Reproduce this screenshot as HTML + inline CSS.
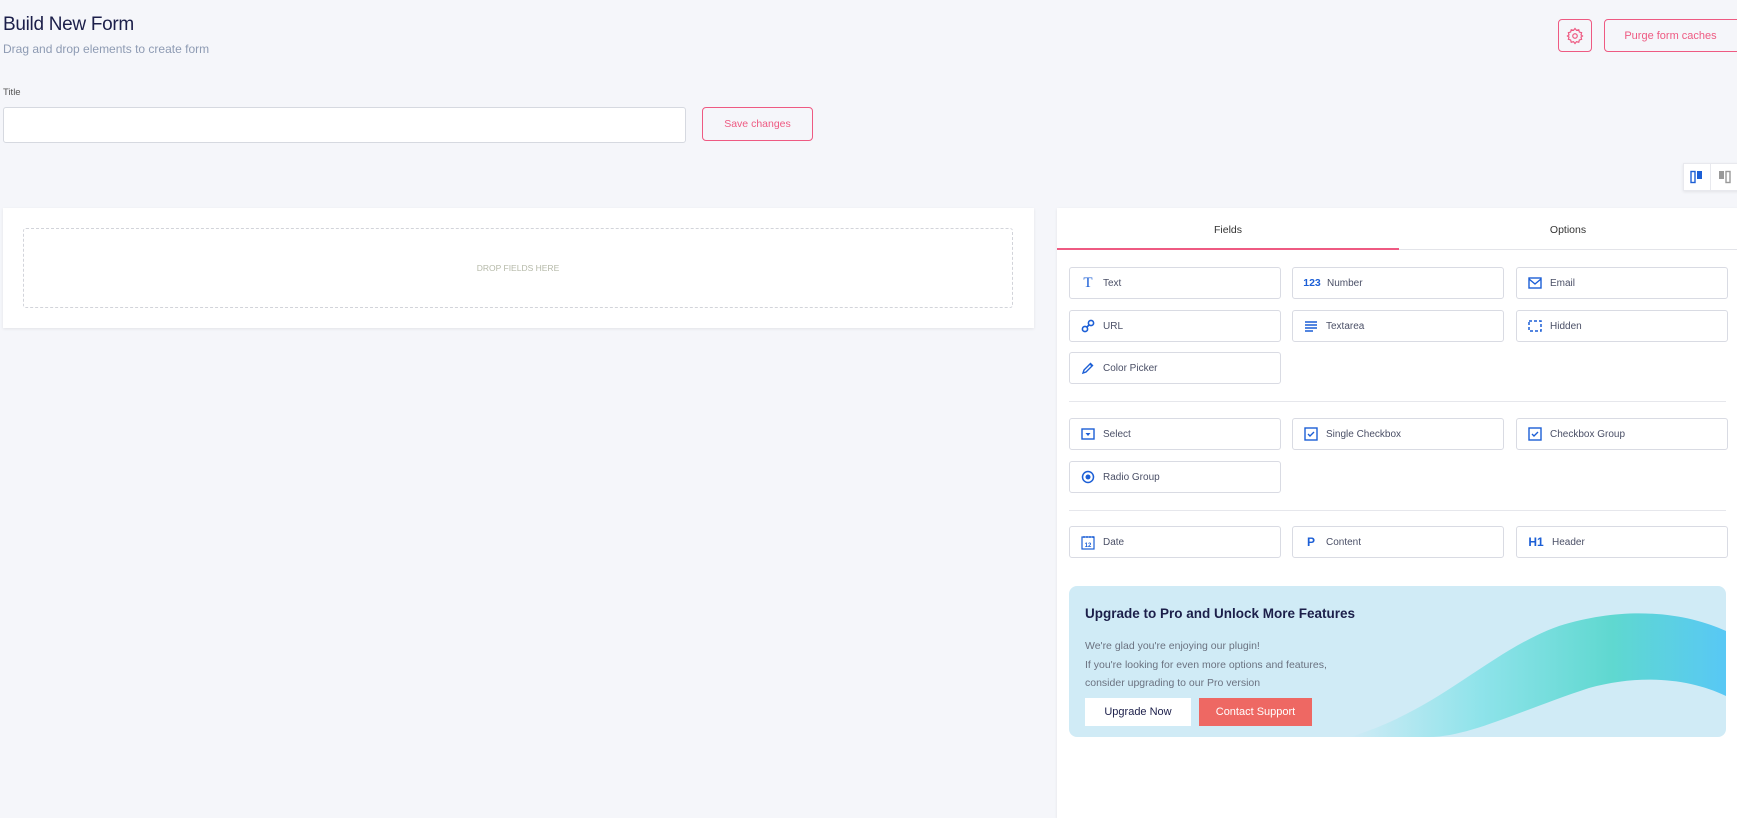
<!DOCTYPE html>
<html><head><meta charset="utf-8"><style>
*{box-sizing:border-box;margin:0;padding:0}
body{width:1737px;height:812px;background:#f5f6fa;font-family:"Liberation Sans",sans-serif;position:relative;overflow:hidden;color:#333}
.a{position:absolute}
h1{position:absolute;left:3px;top:14px;font-size:19px;font-weight:400;color:#1c1f4a;letter-spacing:-0.3px}
.sub{left:3px;top:42px;font-size:12px;color:#8e9bb3}
.btn{position:absolute;border:1px solid #ee5a82;border-radius:4px;color:#ee5a82;font-size:11px;display:flex;align-items:center;justify-content:center;background:transparent}
.card{background:#fff;box-shadow:0 1px 3px rgba(0,0,0,.08)}
.f{position:absolute;width:212px;height:32px;border:1px solid #d9dbe3;border-radius:3px;background:#fff;font-size:10px;color:#4a4f66;display:flex;align-items:center;padding-left:10px}
.f .i{width:16px;height:16px;margin-right:7px;display:flex;align-items:center;justify-content:center;color:#1c5fd6;font-weight:bold;font-size:11px}
.hr{position:absolute;left:1069px;width:657px;height:1px;background:#e6e7ec}
</style></head><body>
<h1>Build New Form</h1>
<div class="a sub">Drag and drop elements to create form</div>
<div class="btn" style="left:1558px;top:19px;width:34px;height:33px"><svg width="18" height="18" viewBox="0 0 24 24" fill="none" stroke="#ee5a82" stroke-width="1.6"><circle cx="12" cy="12" r="3"/><path d="M12 2l2 2.5 3-.8.8 3 3 .8-.8 3L22 12l-2 1.5.8 3-3 .8-.8 3-3-.8L12 22l-2-2.5-3 .8-.8-3-3-.8.8-3L2 12l2-1.5-.8-3 3-.8.8-3 3 .8z"/></svg></div>
<div class="btn" style="left:1604px;top:19px;width:145px;height:33px;padding-right:12px">Purge form caches</div>
<div class="a" style="left:3px;top:87px;font-size:9.5px;color:#555">Title</div>
<div class="a" style="left:3px;top:107px;width:683px;height:36px;background:#fff;border:1px solid #d6d9e0;border-radius:3px"></div>
<div class="btn" style="left:702px;top:107px;width:111px;height:34px;font-size:10.5px">Save changes</div>
<div class="a card" style="left:1683px;top:163px;width:60px;height:28px;display:flex;border:1px solid #e8e9ee">
<div style="width:27px;display:flex;align-items:center;justify-content:center;border-right:1px solid #e8e9ee"><svg width="14" height="14"><rect x="1" y="1.5" width="4" height="11" fill="none" stroke="#1c5fd6" stroke-width="1.4"/><rect x="7" y="1" width="5" height="8" fill="#1c5fd6"/></svg></div>
<div style="width:27px;display:flex;align-items:center;justify-content:center"><svg width="14" height="14"><rect x="1" y="1" width="5" height="8" fill="#999"/><rect x="8" y="1.5" width="4" height="11" fill="none" stroke="#999" stroke-width="1.4"/></svg></div></div>
<div class="a card" style="left:3px;top:208px;width:1031px;height:120px"></div>
<div class="a" style="left:23px;top:228px;width:990px;height:80px;border:1px dashed #d2d4da;border-radius:3px;display:flex;align-items:center;justify-content:center;font-size:8.5px;color:#b5b9a8">DROP FIELDS HERE</div>
<div class="a card" style="left:1057px;top:208px;width:690px;height:610px"></div>
<div class="a" style="left:1057px;top:249px;width:690px;height:1px;background:#e3e4e9"></div>
<div class="a" style="left:1057px;top:248px;width:342px;height:2px;background:#ee5a82"></div>
<div class="a" style="left:1057px;top:224px;width:342px;text-align:center;font-size:10.5px;color:#333">Fields</div>
<div class="a" style="left:1399px;top:224px;width:338px;text-align:center;font-size:10.5px;color:#333">Options</div>

<div class="f" style="left:1069px;top:267px"><span class="i" style="font-family:'Liberation Serif';font-weight:normal;font-size:15px">T</span>Text</div>
<div class="f" style="left:1292px;top:267px"><span class="i" style="width:18px;margin-right:6px;font-size:10.5px">123</span>Number</div>
<div class="f" style="left:1516px;top:267px"><span class="i"><svg width="14" height="12"><rect x="1" y="1" width="12" height="10" fill="none" stroke="#1c5fd6" stroke-width="1.4"/><path d="M1 2l6 5 6-5" fill="none" stroke="#1c5fd6" stroke-width="1.4"/></svg></span>Email</div>
<div class="f" style="left:1069px;top:310px"><span class="i"><svg width="14" height="14" fill="none" stroke="#1c5fd6" stroke-width="1.6"><circle cx="4" cy="10" r="2.6"/><circle cx="10" cy="4" r="2.6"/><path d="M5.5 8.5l3-3"/></svg></span>URL</div>
<div class="f" style="left:1292px;top:310px"><span class="i"><svg width="14" height="12" stroke="#1c5fd6" stroke-width="1.4"><path d="M1 2h12M1 5h12M1 8h12M1 11h8"/></svg></span>Textarea</div>
<div class="f" style="left:1516px;top:310px"><span class="i"><svg width="14" height="12"><rect x="1" y="1" width="12" height="10" fill="none" stroke="#1c5fd6" stroke-width="1.5" stroke-dasharray="3 2"/></svg></span>Hidden</div>
<div class="f" style="left:1069px;top:352px"><span class="i"><svg width="14" height="14" fill="none" stroke="#1c5fd6" stroke-width="1.4"><path d="M2 12l1-3 6-6 2 2-6 6z M9 2l3 3"/></svg></span>Color Picker</div>
<div class="hr" style="top:401px"></div>
<div class="f" style="left:1069px;top:418px"><span class="i"><svg width="14" height="12"><rect x="1" y="1" width="12" height="10" fill="none" stroke="#1c5fd6" stroke-width="1.4"/><path d="M4.5 5h5l-2.5 3z" fill="#1c5fd6"/></svg></span>Select</div>
<div class="f" style="left:1292px;top:418px"><span class="i"><svg width="14" height="14"><rect x="1" y="1" width="12" height="12" fill="none" stroke="#1c5fd6" stroke-width="1.4"/><path d="M4 7l2 2 4-4" fill="none" stroke="#1c5fd6" stroke-width="1.4"/></svg></span>Single Checkbox</div>
<div class="f" style="left:1516px;top:418px"><span class="i"><svg width="14" height="14"><rect x="1" y="1" width="12" height="12" fill="none" stroke="#1c5fd6" stroke-width="1.4"/><path d="M4 7l2 2 4-4" fill="none" stroke="#1c5fd6" stroke-width="1.4"/></svg></span>Checkbox Group</div>
<div class="f" style="left:1069px;top:461px"><span class="i"><svg width="14" height="14"><circle cx="7" cy="7" r="5.5" fill="none" stroke="#1c5fd6" stroke-width="1.5"/><circle cx="7" cy="7" r="2.5" fill="#1c5fd6"/></svg></span>Radio Group</div>
<div class="hr" style="top:510px"></div>
<div class="f" style="left:1069px;top:526px"><span class="i"><svg width="14" height="15"><rect x="1" y="2" width="12" height="12" fill="none" stroke="#1c5fd6" stroke-width="1.2"/><path d="M3 1v2M6 1v2M9 1v2M12 1v2" stroke="#1c5fd6"/><text x="7" y="12" font-size="6" text-anchor="middle" fill="#1c5fd6" font-family="Liberation Sans">12</text></svg></span>Date</div>
<div class="f" style="left:1292px;top:526px"><span class="i" style="font-size:12px">P</span>Content</div>
<div class="f" style="left:1516px;top:526px"><span class="i" style="font-size:12px;width:18px">H1</span>Header</div>

<div class="a" style="left:1069px;top:586px;width:657px;height:151px;border-radius:8px;background:#d0ebf6;overflow:hidden">
<svg class="a" style="left:0;top:0" width="657" height="151"><defs><linearGradient id="g" x1="0" x2="1"><stop offset="0" stop-color="#d0ebf6"/><stop offset=".35" stop-color="#8ee3ea"/><stop offset=".7" stop-color="#5fd8d0"/><stop offset="1" stop-color="#58c8f5"/></linearGradient></defs><path d="M280 151C370 125 420 65 490 40 560 18 620 28 657 45V110C620 92 570 88 520 102 450 125 400 151 360 151z" fill="url(#g)"/></svg>
<div class="a" style="left:16px;top:20px;font-size:13.5px;font-weight:bold;color:#1c1f4a">Upgrade to Pro and Unlock More Features</div>
<div class="a" style="left:16px;top:51px;font-size:10.5px;line-height:18.5px;color:#6b7280">We're glad you're enjoying our plugin!<br>If you're looking for even more options and features,<br>consider upgrading to our Pro version</div>
<div class="a" style="left:16px;top:112px;width:106px;height:28px;background:#fff;font-size:11px;color:#1c1f4a;display:flex;align-items:center;justify-content:center">Upgrade Now</div>
<div class="a" style="left:130px;top:112px;width:113px;height:28px;background:#ee6863;font-size:11px;color:#fff;display:flex;align-items:center;justify-content:center">Contact Support</div>
</div>
</body></html>
